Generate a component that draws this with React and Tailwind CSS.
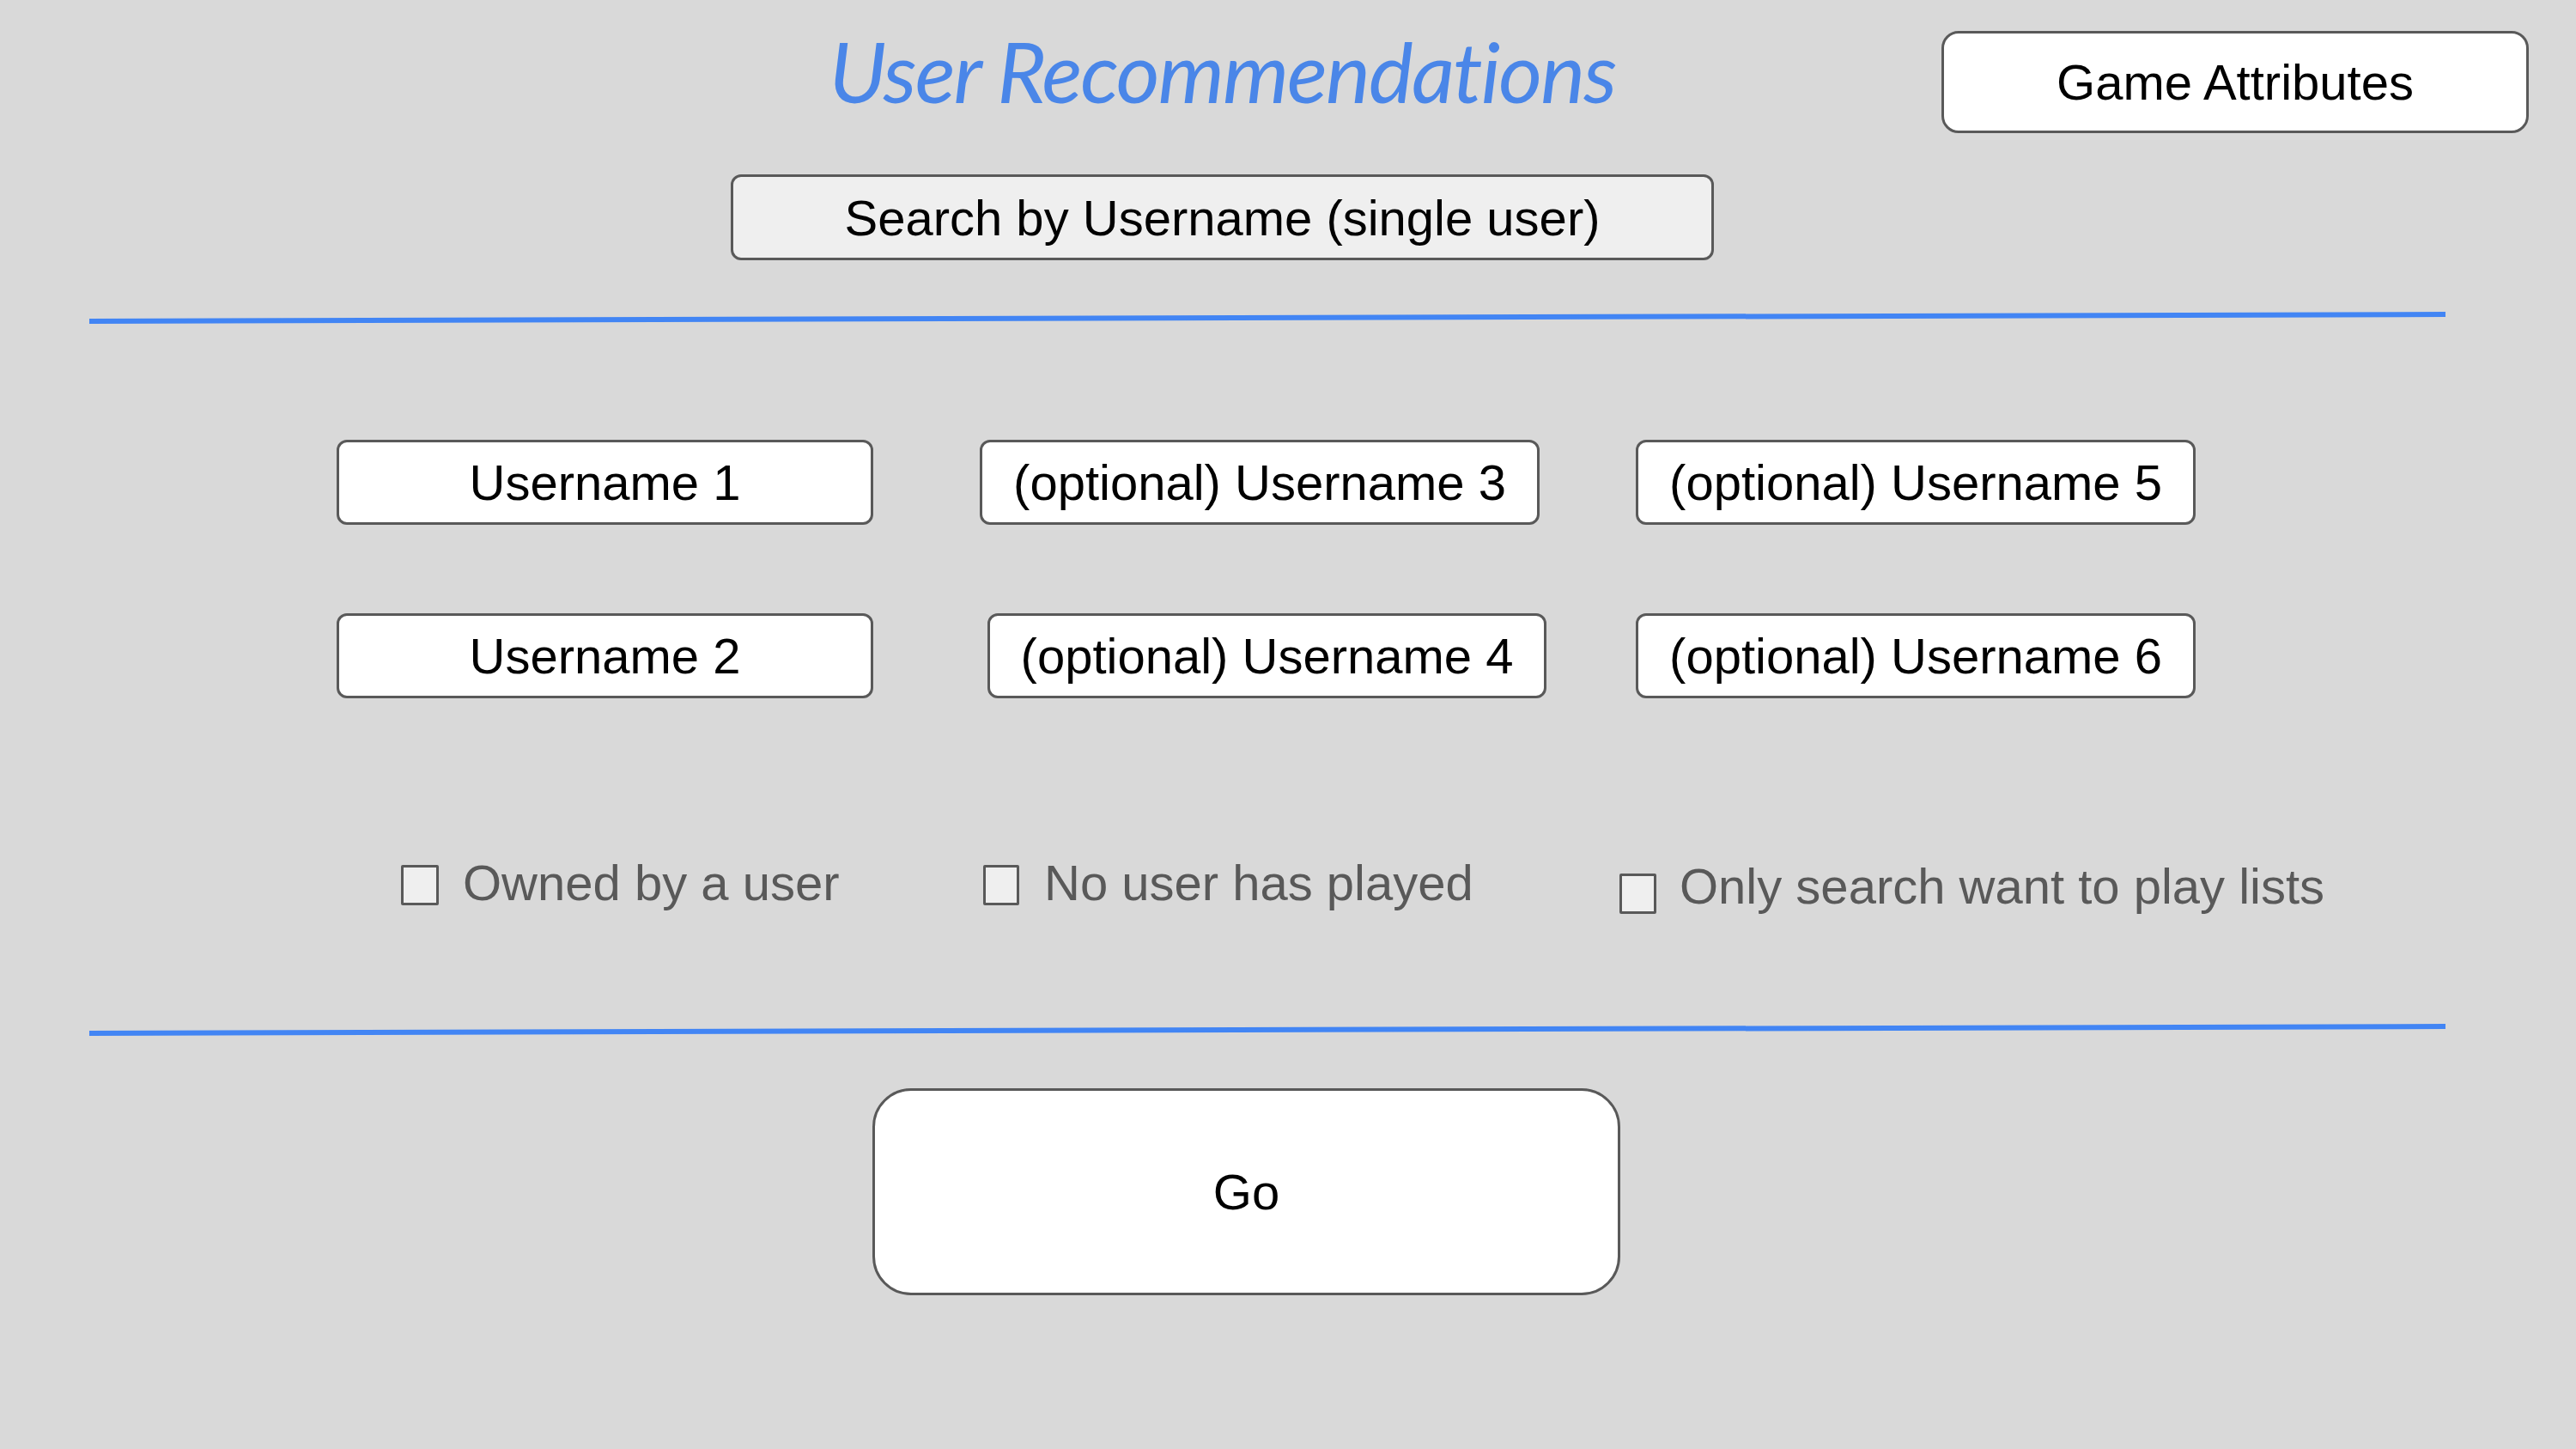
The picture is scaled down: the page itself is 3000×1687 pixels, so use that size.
import React, { useState } from "react";

const ROW_ONE = [
  { label: "Username 1", cls: "w-[625px]" },
  { label: "(optional) Username 3", cls: "ml-[124px] w-[652px]" },
  { label: "(optional) Username 5", cls: "ml-[112px] w-[652px]" },
];

const ROW_TWO = [
  { label: "Username 2", cls: "w-[625px]" },
  { label: "(optional) Username 4", cls: "ml-[133px] w-[651px]" },
  { label: "(optional) Username 6", cls: "ml-[104px] w-[652px]" },
];

function UserField({ label, cls, value, onChange }) {
  return (
    <input
      value={value}
      onChange={onChange}
      placeholder={label}
      className={`${cls} h-[99px] rounded-[12px] border-[3px] border-[#595959] bg-white text-center text-[58px] text-black placeholder:text-black outline-none`}
    />
  );
}

function Check({ label, checked, onToggle, boxCls, textCls }) {
  return (
    <label className="flex items-start cursor-pointer select-none">
      <span
        onClick={onToggle}
        className={`${boxCls} h-[47px] rounded-[2px] border-[3px] border-[#595959] bg-[#efefef] flex items-center justify-center text-[30px] leading-none text-[#595959]`}
      >
        {checked ? "✓" : ""}
      </span>
      <span className={`${textCls} text-[58px] leading-none text-[#595959]`}>{label}</span>
    </label>
  );
}

export default function App() {
  const [names, setNames] = useState({});
  const [checks, setChecks] = useState({ owned: false, played: false, wantlist: false });

  const setName = (key) => (e) => setNames((prev) => ({ ...prev, [key]: e.target.value }));
  const toggle = (key) => () => setChecks((prev) => ({ ...prev, [key]: !prev[key] }));

  return (
    <div className="w-[3000px] h-[1687px] bg-[#d9d9d9] overflow-hidden font-['Liberation_Sans',Arial,sans-serif] text-black">
      {/* header */}
      <div className="flex items-start pt-[36px]">
        <div className="ml-[851px] w-[1145px] flex flex-col items-center">
          <h1 className="-mt-[3px] font-['Lato',sans-serif] italic text-[98px] leading-none tracking-[-0.02em] text-[#4a86e8]">
            User Recommendations
          </h1>
          <button className="mt-[72px] w-[1145px] h-[100px] rounded-[12px] border-[3px] border-[#595959] bg-[#efefef] text-[58px]">
            Search by Username (single user)
          </button>
        </div>
        <button className="ml-[265px] w-[684px] h-[119px] rounded-[20px] border-[3px] border-[#595959] bg-white text-[58px]">
          Game Attributes
        </button>
      </div>

      <div className="mt-[64px] ml-[104px] w-[2744px] h-[6px] bg-[#4285f4] rotate-[-0.167deg]" />

      {/* usernames */}
      <div className="mt-[139px] ml-[392px] flex">
        {ROW_ONE.map((f) => (
          <UserField key={f.label} {...f} value={names[f.label] || ""} onChange={setName(f.label)} />
        ))}
      </div>
      <div className="mt-[103px] ml-[392px] flex">
        {ROW_TWO.map((f) => (
          <UserField key={f.label} {...f} value={names[f.label] || ""} onChange={setName(f.label)} />
        ))}
      </div>

      {/* filters */}
      <div className="mt-[186px] ml-[467px] grid grid-cols-[678px_741px_auto] items-start">
        <Check
          label="Owned by a user"
          checked={checks.owned}
          onToggle={toggle("owned")}
          boxCls="mt-[8px] w-[44px]"
          textCls="ml-[28px]"
        />
        <Check
          label="No user has played"
          checked={checks.played}
          onToggle={toggle("played")}
          boxCls="mt-[8px] w-[42px]"
          textCls="ml-[29px]"
        />
        <Check
          label="Only search want to play lists"
          checked={checks.wantlist}
          onToggle={toggle("wantlist")}
          boxCls="mt-[18px] w-[43px]"
          textCls="mt-[4px] ml-[27px]"
        />
      </div>

      <div className="mt-[132px] ml-[104px] w-[2744px] h-[6px] bg-[#4285f4] rotate-[-0.167deg]" />

      <div className="mt-[65px] ml-[1016px]">
        <button className="w-[871px] h-[241px] rounded-[45px] border-[3px] border-[#595959] bg-white text-[58px]">
          Go
        </button>
      </div>
    </div>
  );
}
